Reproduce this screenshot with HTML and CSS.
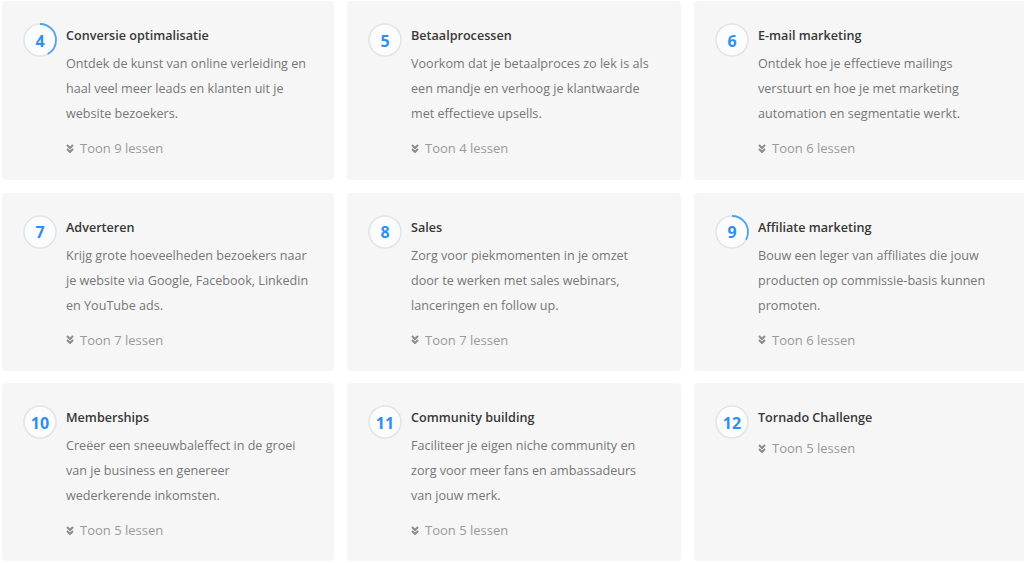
FILE: index.html
```html
<!DOCTYPE html>
<html lang="nl">
<head>
<meta charset="utf-8">
<title>Modules</title>
<link rel="stylesheet" href="styles.css">
</head>
<body>
<div class="grid">
  <div class="card">
    <div class="num"><svg class="ring" viewBox="0 0 34 34"><circle class="track" cx="17" cy="17" r="16"/><circle class="arc" cx="17" cy="17" r="16" stroke-dasharray="42 101" transform="rotate(-90 17 17)"/></svg><span>4</span></div>
    <div class="body">
      <h3>Conversie optimalisatie</h3>
      <p>Ontdek de kunst van online verleiding en haal veel meer leads en klanten uit je website bezoekers.</p>
      <div class="toon"><svg viewBox="0 0 8 9"><polyline points="1,1 4,4 7,1"/><polyline points="1,5 4,8 7,5"/></svg>Toon 9 lessen</div>
    </div>
  </div>
  <div class="card">
    <div class="num"><svg class="ring" viewBox="0 0 34 34"><circle class="track" cx="17" cy="17" r="16"/></svg><span>5</span></div>
    <div class="body">
      <h3>Betaalprocessen</h3>
      <p>Voorkom dat je betaalproces zo lek is als een mandje en verhoog je klantwaarde met effectieve upsells.</p>
      <div class="toon"><svg viewBox="0 0 8 9"><polyline points="1,1 4,4 7,1"/><polyline points="1,5 4,8 7,5"/></svg>Toon 4 lessen</div>
    </div>
  </div>
  <div class="card">
    <div class="num"><svg class="ring" viewBox="0 0 34 34"><circle class="track" cx="17" cy="17" r="16"/></svg><span>6</span></div>
    <div class="body">
      <h3>E-mail marketing</h3>
      <p>Ontdek hoe je effectieve mailings verstuurt en hoe je met marketing automation en segmentatie werkt.</p>
      <div class="toon"><svg viewBox="0 0 8 9"><polyline points="1,1 4,4 7,1"/><polyline points="1,5 4,8 7,5"/></svg>Toon 6 lessen</div>
    </div>
  </div>
  <div class="card">
    <div class="num"><svg class="ring" viewBox="0 0 34 34"><circle class="track" cx="17" cy="17" r="16"/></svg><span>7</span></div>
    <div class="body">
      <h3>Adverteren</h3>
      <p>Krijg grote hoeveelheden bezoekers naar je website via Google, Facebook, Linkedin en YouTube ads.</p>
      <div class="toon"><svg viewBox="0 0 8 9"><polyline points="1,1 4,4 7,1"/><polyline points="1,5 4,8 7,5"/></svg>Toon 7 lessen</div>
    </div>
  </div>
  <div class="card">
    <div class="num"><svg class="ring" viewBox="0 0 34 34"><circle class="track" cx="17" cy="17" r="16"/></svg><span>8</span></div>
    <div class="body">
      <h3>Sales</h3>
      <p>Zorg voor piekmomenten in je omzet door te werken met sales webinars, lanceringen en follow up.</p>
      <div class="toon"><svg viewBox="0 0 8 9"><polyline points="1,1 4,4 7,1"/><polyline points="1,5 4,8 7,5"/></svg>Toon 7 lessen</div>
    </div>
  </div>
  <div class="card">
    <div class="num"><svg class="ring" viewBox="0 0 34 34"><circle class="track" cx="17" cy="17" r="16"/><circle class="arc" cx="17" cy="17" r="16" stroke-dasharray="33 101" transform="rotate(-90 17 17)"/></svg><span>9</span></div>
    <div class="body">
      <h3>Affiliate marketing</h3>
      <p>Bouw een leger van affiliates die jouw producten op commissie-basis kunnen promoten.</p>
      <div class="toon"><svg viewBox="0 0 8 9"><polyline points="1,1 4,4 7,1"/><polyline points="1,5 4,8 7,5"/></svg>Toon 6 lessen</div>
    </div>
  </div>
  <div class="card">
    <div class="num"><svg class="ring" viewBox="0 0 34 34"><circle class="track" cx="17" cy="17" r="16"/></svg><span>10</span></div>
    <div class="body">
      <h3>Memberships</h3>
      <p>Creëer een sneeuwbaleffect in de groei van je business en genereer wederkerende inkomsten.</p>
      <div class="toon"><svg viewBox="0 0 8 9"><polyline points="1,1 4,4 7,1"/><polyline points="1,5 4,8 7,5"/></svg>Toon 5 lessen</div>
    </div>
  </div>
  <div class="card">
    <div class="num"><svg class="ring" viewBox="0 0 34 34"><circle class="track" cx="17" cy="17" r="16"/></svg><span>11</span></div>
    <div class="body">
      <h3>Community building</h3>
      <p>Faciliteer je eigen niche community en zorg voor meer fans en ambassadeurs van jouw merk.</p>
      <div class="toon"><svg viewBox="0 0 8 9"><polyline points="1,1 4,4 7,1"/><polyline points="1,5 4,8 7,5"/></svg>Toon 5 lessen</div>
    </div>
  </div>
  <div class="card">
    <div class="num"><svg class="ring" viewBox="0 0 34 34"><circle class="track" cx="17" cy="17" r="16"/></svg><span>12</span></div>
    <div class="body">
      <h3>Tornado Challenge</h3>
      <div class="toon short"><svg viewBox="0 0 8 9"><polyline points="1,1 4,4 7,1"/><polyline points="1,5 4,8 7,5"/></svg>Toon 5 lessen</div>
    </div>
  </div>
</div>
</body>
</html>
```
FILE: styles.css
```css
html, body {
  margin: 0;
  padding: 0;
  background: #ffffff;
  overflow: hidden;
}
body {
  font-family: "Open Sans", "Liberation Sans", sans-serif;
  width: 1024px;
  height: 563px;
}
.grid {
  display: grid;
  grid-template-columns: 332px 334px 334px;
  grid-template-rows: 179px 178px 178px;
  column-gap: 13px;
  row-gap: 12.5px;
  padding: 1px 0 0 2px;
}
.card {
  background: #f6f6f6;
  border-radius: 4px;
  display: flex;
  align-items: flex-start;
  padding: 22px 20px 0 21px;
  box-sizing: border-box;
}
.num {
  display: grid;
  width: 34px;
  height: 34px;
  flex: none;
  margin-right: 9px;
}
.num > * {
  grid-area: 1 / 1;
}
.ring {
  width: 34px;
  height: 34px;
}
.track {
  fill: #fbfcfe;
  stroke: #e4e4e4;
  stroke-width: 1.6;
}
.arc {
  fill: none;
  stroke: #4da3f5;
  stroke-width: 1.8;
}
.num span {
  align-self: center;
  justify-self: center;
  font-size: 16px;
  font-weight: 700;
  color: #2f8ff0;
  line-height: 1;
  margin-top: 1px;
}
.body {
  flex: 0 1 244px;
  max-width: 244px;
  min-width: 0;
}
h3 {
  margin: 3px 0 0;
  font-size: 12.6px;
  line-height: 20px;
  font-weight: 600;
  color: #383838;
}
p {
  margin: 5px 0 0;
  font-size: 12.6px;
  line-height: 25px;
  color: #777777;
}
.toon {
  margin-top: 12px;
  font-size: 13px;
  line-height: 20px;
  color: #9a9a9a;
  display: flex;
  align-items: center;
}
.toon.short {
  margin-top: 10px;
}
.toon svg {
  width: 8px;
  height: 9px;
  margin-right: 6px;
  fill: none;
  stroke: #8c8c8c;
  stroke-width: 2;
}
```
